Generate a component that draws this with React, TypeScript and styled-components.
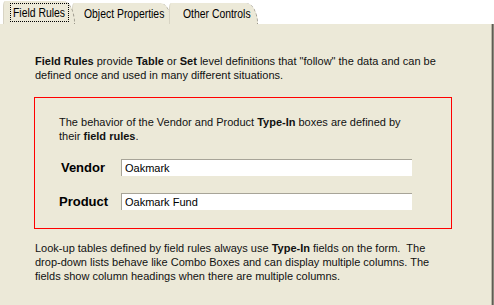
import React from "react";
import styled, { createGlobalStyle } from "styled-components";

const GlobalStyle = createGlobalStyle`
  html, body {
    margin: 0;
    padding: 0;
    background: #ffffff;
    overflow: hidden;
  }
  * {
    box-sizing: border-box;
  }
`;

const Window = styled.div`
  width: 494px;
  height: 305px;
  display: flex;
  flex-direction: column;
  background: #ffffff;
  font-family: Tahoma, "Liberation Sans", Arial, sans-serif;
  color: #111111;
`;

const TabStrip = styled.div`
  height: 24px;
  display: flex;
  align-items: flex-end;
  padding-left: 3px;
`;

const Tab = styled.div<{ $active?: boolean; $width: number; $pad: number }>`
  position: relative;
  flex: none;
  width: ${(p) => p.$width}px;
  height: ${(p) => (p.$active ? 23 : 21)}px;
  margin-right: -3px;
  z-index: ${(p) => (p.$active ? 3 : 1)};
  display: flex;
  align-items: center;
  padding-left: ${(p) => p.$pad}px;
  background: #ece9d8;
  border-left: 1px solid #d8d4c4;
  border-right: 1px dashed #9a978a;
  border-top-right-radius: 12px 100%;
  border-top-left-radius: 2px 6px;
  font-family: "Liberation Sans", Arial, sans-serif;
  font-size: 13px;
  color: #000000;
  white-space: nowrap;
`;

const TabLabel = styled.span<{ $focus?: boolean; $w: number }>`
  display: inline-block;
  width: ${(p) => p.$w}px;
  height: 19px;
  padding: 1px 0 0 2px;
  line-height: 15px;
  border: 1px dotted ${(p) => (p.$focus ? "#000000" : "transparent")};
`;

const Squeeze = styled.span`
  display: inline-block;
  transform: scaleX(0.8);
  transform-origin: left center;
`;

const Panel = styled.div`
  flex: 1;
  position: relative;
  z-index: 2;
  background: #ece9d8;
  border-right: 1px solid #8a887c;
  box-shadow: inset -1px 0 0 #5e5c53, inset -2px 0 0 #b8b5a6;
  padding: 30px 0 0 34px;
`;

const Text = styled.p`
  margin: 0;
  padding-left: 1px;
  font-size: 11px;
  line-height: 14px;
  width: 420px;
  b {
    font-weight: bold;
  }
`;

const RuleBox = styled.div`
  width: 418px;
  margin: 15px 0 12px 0;
  border: 1px solid #ff0000;
  padding: 17px 0 18px 24px;
`;

const BoxText = styled(Text)`
  padding-left: 0;
  width: 360px;
  margin-bottom: 16px;
`;

const FieldRow = styled.div`
  display: flex;
  align-items: center;
  gap: 16px;
  & + & {
    margin-top: 17px;
  }
`;

const FieldLabel = styled.span`
  width: 46px;
  text-align: right;
  font-size: 13px;
  font-weight: bold;
  color: #000000;
`;

const TypeIn = styled.div`
  width: 291px;
  height: 17px;
  background: #ffffff;
  border-top: 1px solid #a7a498;
  border-left: 1px solid #a7a498;
  padding: 1px 0 0 3px;
  font-size: 11px;
  line-height: 14px;
  color: #000000;
`;

export default function App() {
  return (
    <Window>
      <GlobalStyle />
      <TabStrip>
        <Tab $active $width={72} $pad={6}>
          <TabLabel $focus $w={59}>
            <Squeeze>Field Rules</Squeeze>
          </TabLabel>
        </Tab>
        <Tab $width={100} $pad={8}>
          <TabLabel $w={86}>
            <Squeeze>Object Properties</Squeeze>
          </TabLabel>
        </Tab>
        <Tab $width={89} $pad={10}>
          <TabLabel $w={72}>
            <Squeeze>Other Controls</Squeeze>
          </TabLabel>
        </Tab>
      </TabStrip>
      <Panel>
        <Text>
          <b>Field Rules</b> provide <b>Table</b> or <b>Set</b> level definitions that "follow" the data and can be
          defined once and used in many different situations.
        </Text>
        <RuleBox>
          <BoxText>
            The behavior of the Vendor and Product <b>Type-In</b> boxes are defined by their <b>field rules</b>.
          </BoxText>
          <FieldRow>
            <FieldLabel>Vendor</FieldLabel>
            <TypeIn>Oakmark</TypeIn>
          </FieldRow>
          <FieldRow>
            <FieldLabel>Product</FieldLabel>
            <TypeIn>Oakmark Fund</TypeIn>
          </FieldRow>
        </RuleBox>
        <Text>
          Look-up tables defined by field rules always use <b>Type-In</b> fields on the form.&nbsp; The drop-down lists
          behave like Combo Boxes and can display multiple columns. The fields show column headings when there are
          multiple columns.
        </Text>
      </Panel>
    </Window>
  );
}
